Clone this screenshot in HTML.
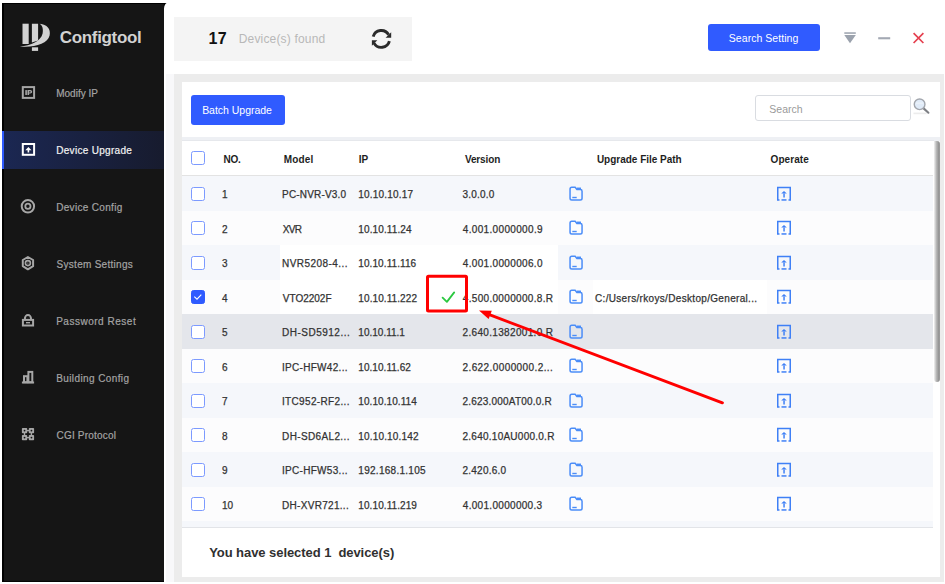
<!DOCTYPE html>
<html><head><meta charset="utf-8">
<style>
*{margin:0;padding:0;box-sizing:border-box}
html,body{width:945px;height:584px;overflow:hidden;background:#fff;font-family:"Liberation Sans",sans-serif;position:relative}
.a,.t{position:absolute}
.t{white-space:nowrap;line-height:1}
.btn{position:absolute;background:#305bff;border-radius:3px}
.row{position:absolute;left:182px;width:751px}
.cb{position:absolute;left:191px;width:14px;height:14px;border:1.5px solid #7c9aff;border-radius:2.5px;background:#fff}
.chk{background:#2f5bff;border-color:#2f5bff}
</style></head><body>
<svg width="0" height="0" style="position:absolute">
<defs>
<g id="ifold" fill="none" stroke="#4b8df8" stroke-width="1.5" stroke-linejoin="round">
<path d="M2.05 3 Q2.05 1.25 3.8 1.25 H7.2 L8.9 3.5 H12.3 Q14.05 3.5 14.05 5.2 V12.2 Q14.05 13.95 12.3 13.95 H3.8 Q2.05 13.95 2.05 12.2 Z"/>
<path d="M9 2.3 H13"/>
<path d="M4.3 11.5 H8.7" stroke-width="1.4"/>
</g>
<g id="iupl" fill="none" stroke="#3f80f6" stroke-width="1.5">
<path d="M3.5 13.95 H1.75 V1.45 H14.25 V13.95 H12.5"/>
<path d="M5.5 13.95 H10.5"/>
<path d="M8 4.9 L10.8 7.6 H5.2 Z" fill="#3f80f6" stroke="none"/>
<path d="M7.3 7.4 H8.8 V11.6 H7.3 Z" fill="#3f80f6" stroke="none"/>
</g>
</defs></svg>

<div class="a" style="left:2px;top:3px;width:162px;height:579px;background:#151515;border-top:1px solid #000;border-left:2px solid #000;border-bottom:1px solid #050505"></div><svg class="a" style="left:158px;top:3px" width="10" height="8" viewBox="158 3 10 8"><path d="M158 3 H166.6 C165.2 3.9 164.2 5.4 164 8.5 H163.9 V4 H158 Z" fill="#000"/></svg>
<div class="a" style="left:2px;top:131px;width:162px;height:38px;background:linear-gradient(to right,#1b2752,#171b2e);border-left:2px solid #2f5bff"></div>
<svg class="a" style="left:0;top:0" width="170" height="584" viewBox="0 0 170 584">
  <g fill="#d2d2d2">
    <rect x="22.5" y="23.7" width="6.2" height="20.3"/>
    <path d="M31.9 23.7 H38.1 V40.6 L31.9 42.6 Z"/>
    <path d="M39.7 23.7 C47 24.2 51 29 49.6 35.5 C47.8 43.5 35 47.8 19.9 46.6 C31 45.5 41 41 42.6 33.5 C43.5 28.5 42.2 25.2 39.7 23.7 Z"/>
    <rect x="31.9" y="47.3" width="6.2" height="3.6"/>
  </g>
  <g fill="none" stroke="#a6a6a6" stroke-width="2">
    <rect x="22.8" y="87.1" width="11.3" height="10.8"/>
    <circle cx="27.9" cy="206.3" r="6.2"/>
    <circle cx="27.9" cy="206.3" r="2.6" stroke-width="1.8"/>
    <path d="M27.9 257 L33.1 260 L33.1 266.2 L27.9 269.3 L22.8 266.2 L22.8 260 Z" stroke-linejoin="round"/>
    <circle cx="27.9" cy="263.1" r="2.5" stroke-width="1.6"/><circle cx="27.9" cy="263.1" r="0.5" stroke-width="0.6" stroke="#777"/>
    <rect x="22.9" y="319.9" width="10.2" height="5.6"/>
    <path d="M24.9 319.6 V318.5 A3 3.4 0 0 1 31 318.5 V319.6"/>
    <path d="M21.9 382.5 H34.1"/>
    <rect x="24" y="376.2" width="3.4" height="6"/>
    <rect x="28.4" y="371.9" width="3.9" height="10.3"/>
  </g>
  <g fill="#a6a6a6">
    <path d="M26 322 H30 V323.4 H26 Z"/>
    <rect x="25.3" y="90.1" width="1.6" height="4.9"/><path fill-rule="evenodd" d="M27.5 90.1 H30.3 A1.9 1.7 0 0 1 30.3 93.5 H29.1 V95 H27.5 Z M29.1 91.2 V92.4 H30.1 A0.6 0.6 0 0 0 30.1 91.2 Z"/>
    <rect x="21.9" y="428" width="5.3" height="5.2" rx="0.8"/>
    <rect x="28.8" y="428" width="5.3" height="5.2" rx="0.8"/>
    <rect x="21.9" y="435" width="5.3" height="5.2" rx="0.8"/>
    <rect x="28.8" y="435" width="5.3" height="5.2" rx="0.8"/>
    <rect x="26.5" y="429.9" width="3" height="1.4"/>
    <rect x="26.5" y="436.9" width="3" height="1.4"/>
    <rect x="23.8" y="432.5" width="1.4" height="3.2"/>
    <rect x="30.7" y="432.5" width="1.4" height="3.2"/>
  </g>
  <g fill="#141414">
    <circle cx="24.55" cy="430.6" r="0.9"/>
    <circle cx="31.45" cy="430.6" r="0.9"/>
    <circle cx="24.55" cy="437.6" r="0.9"/>
    <circle cx="31.45" cy="437.6" r="0.9"/>
  </g>
  <rect x="22.8" y="144" width="11.3" height="10.8" fill="none" stroke="#fff" stroke-width="2"/>
  <path fill="#fff" d="M28.4 146.9 L31.5 150.3 H29.2 V152.4 H27.6 V150.3 H25.3 Z"/>
</svg>
<div class="t" style="left:59.80px;top:29px;font-size:17px;color:#d2d2d2;font-weight:bold;letter-spacing:-0.341px">Configtool</div>
<div class="t" style="left:56.18px;top:89px;font-size:10px;color:#a4a4a4;letter-spacing:0.021px;-webkit-text-stroke:0.2px #a4a4a4">Modify IP</div>
<div class="t" style="left:56.18px;top:146px;font-size:10px;color:#f2f2f2;letter-spacing:0.312px;-webkit-text-stroke:0.2px #f2f2f2">Device Upgrade</div>
<div class="t" style="left:56.18px;top:203px;font-size:10px;color:#a4a4a4;letter-spacing:0.318px;-webkit-text-stroke:0.2px #a4a4a4">Device Config</div>
<div class="t" style="left:56.55px;top:260px;font-size:10px;color:#a4a4a4;letter-spacing:0.283px;-webkit-text-stroke:0.2px #a4a4a4">System Settings</div>
<div class="t" style="left:56.18px;top:317px;font-size:10px;color:#a4a4a4;letter-spacing:0.514px;-webkit-text-stroke:0.2px #a4a4a4">Password Reset</div>
<div class="t" style="left:56.18px;top:374px;font-size:10px;color:#a4a4a4;letter-spacing:0.400px;-webkit-text-stroke:0.2px #a4a4a4">Building Config</div>
<div class="t" style="left:56.49px;top:431px;font-size:10px;color:#a4a4a4;letter-spacing:0.203px;-webkit-text-stroke:0.2px #a4a4a4">CGI Protocol</div>
<div class="a" style="left:174px;top:17px;width:238px;height:44px;background:#f4f4f4"></div>
<div class="t" style="left:208.49px;top:31px;font-size:16px;color:#111;font-weight:bold;letter-spacing:0.414px">17</div>
<div class="t" style="left:238.72px;top:33px;font-size:12px;color:#b8b8b8;letter-spacing:0.173px">Device(s) found</div>
<svg class="a" style="left:366px;top:24px" width="32" height="30" viewBox="366 24 32 30">
  <g fill="none" stroke="#2a2a2a" stroke-width="2.9">
    <path d="M373.2 36.7 A8.4 8.4 0 0 1 388.6 34.7"/>
    <path d="M389.4 41.1 A8.4 8.4 0 0 1 374 43.1"/>
  </g>
  <g fill="#2a2a2a">
    <path d="M391.2 32.2 V37.8 H385.6 Z"/>
    <path d="M371.9 45.8 V40.3 H377.3 Z"/>
  </g>
</svg>
<div class="btn" style="left:707.5px;top:24px;width:112.5px;height:27px"></div>
<div class="t" style="left:728.82px;top:33px;font-size:10.5px;color:#fff;letter-spacing:0.044px">Search Setting</div>
<svg class="a" style="left:840px;top:28px" width="90" height="20" viewBox="840 28 90 20">
  <rect x="844.3" y="32.3" width="11.5" height="1.5" fill="#9ba2ad"/>
  <path d="M844.3 35 H855.8 L850 43.2 Z" fill="#9ba2ad"/>
  <rect x="878.2" y="37.2" width="12" height="2.1" fill="#a3a9b3"/>
  <path d="M913.6 33.2 L923.4 43 M923.4 33.2 L913.6 43" stroke="#e5404f" stroke-width="1.7"/>
</svg>
<div class="a" style="left:166px;top:74px;width:8px;height:508px;background:#f8f8fa"></div>
<div class="a" style="left:174px;top:74px;width:770px;height:508px;background:#ececec"></div>
<div class="a" style="left:182px;top:82px;width:758px;height:495px;background:#fff"></div>
<div class="btn" style="left:191px;top:95px;width:94px;height:30px"></div>
<div class="t" style="left:202.14px;top:105px;font-size:10.5px;color:#fff;letter-spacing:-0.018px">Batch Upgrade</div>
<div class="a" style="left:755px;top:95px;width:156px;height:26px;border:1px solid #d9dce1;border-radius:3px"></div>
<div class="t" style="left:769.32px;top:104px;font-size:10.5px;color:#9a9a9a">Search</div>
<svg class="a" style="left:910px;top:96px" width="24" height="22" viewBox="910 96 24 22">
  <rect x="913.5" y="112.6" width="13" height="1.6" fill="#ececec"/>
  <line x1="923.6" y1="108.4" x2="928.4" y2="112.7" stroke="#7d7f84" stroke-width="2.1" stroke-linecap="round"/>
  <circle cx="919.6" cy="104.3" r="5.35" fill="#e0ebf8" stroke="#a2a6ad" stroke-width="1.4"/>
  <rect x="916" y="102.6" width="7.2" height="1" fill="#f0f5fb"/>
</svg>
<div class="a" style="left:182px;top:137px;width:758px;height:4px;background:#eef0f4"></div>
<div class="a" style="left:182px;top:140px;width:752px;height:1px;background:#e6e8ec"></div>
<div class="a" style="left:182px;top:175px;width:751px;height:1px;background:#e3e3e3"></div>
<div class="cb" style="top:151px"></div>
<div class="t" style="left:223.53px;top:155px;font-size:10px;color:#1e1e1e;font-weight:bold;letter-spacing:-0.210px">NO.</div>
<div class="t" style="left:283.73px;top:155px;font-size:10px;color:#1e1e1e;font-weight:bold;letter-spacing:0.198px">Model</div>
<div class="t" style="left:358.73px;top:155px;font-size:10px;color:#1e1e1e;font-weight:bold">IP</div>
<div class="t" style="left:464.93px;top:155px;font-size:10px;color:#1e1e1e;font-weight:bold;letter-spacing:-0.132px">Version</div>
<div class="t" style="left:596.90px;top:155px;font-size:10px;color:#1e1e1e;font-weight:bold;letter-spacing:-0.012px">Upgrade File Path</div>
<div class="t" style="left:770.59px;top:155px;font-size:10px;color:#1e1e1e;font-weight:bold;letter-spacing:0.076px">Operate</div>
<div class="row" style="top:176.0px;height:34.5px;background:#f5f7fb"></div>
<div class="row" style="top:210.5px;height:34.5px;background:#fcfcfd"></div>
<div class="row" style="top:245.0px;height:34.5px;background:#f5f7fb"></div>
<div class="row" style="top:279.5px;height:34.5px;background:#fcfcfd"></div>
<div class="row" style="top:314.0px;height:34.5px;background:#e4e6eb"></div>
<div class="row" style="top:348.5px;height:34.5px;background:#fcfcfd"></div>
<div class="row" style="top:383.0px;height:34.5px;background:#f5f7fb"></div>
<div class="row" style="top:417.5px;height:34.5px;background:#fcfcfd"></div>
<div class="row" style="top:452.0px;height:34.5px;background:#f5f7fb"></div>
<div class="row" style="top:486.5px;height:34.5px;background:#fcfcfd"></div>
<div class="a" style="left:279.5px;top:245px;width:278.5px;height:69px;background:#fff"></div>
<div class="a" style="left:593px;top:279.5px;width:173.5px;height:34.5px;background:#fff"></div>
<div class="a" style="left:182px;top:521px;width:751px;height:6px;background:#f5f7fb"></div>
<div class="a" style="left:182px;top:527px;width:751px;height:1px;background:#e2e4e8"></div>
<div class="cb" style="top:186.5px"></div>
<div class="t" style="left:222px;top:190px;font-size:10px;color:#333;-webkit-text-stroke:0.25px #333">1</div>
<div class="t" style="left:282.08px;top:190px;font-size:10px;color:#333;letter-spacing:0.177px;-webkit-text-stroke:0.25px #333">PC-NVR-V3.0</div>
<div class="t" style="left:358.34px;top:190px;font-size:10px;color:#333;letter-spacing:0.194px;-webkit-text-stroke:0.25px #333">10.10.10.17</div>
<div class="t" style="left:462.62px;top:190px;font-size:10px;color:#333;letter-spacing:0.182px;-webkit-text-stroke:0.25px #333">3.0.0.0</div>
<svg class="a" style="left:568px;top:185.8px" width="16" height="16" viewBox="0 0 16 16"><use href="#ifold"/></svg>
<svg class="a" style="left:776px;top:185.8px" width="16" height="16" viewBox="0 0 16 16"><use href="#iupl"/></svg>
<div class="cb" style="top:221.0px"></div>
<div class="t" style="left:222px;top:225px;font-size:10px;color:#333;-webkit-text-stroke:0.25px #333">2</div>
<div class="t" style="left:282.68px;top:225px;font-size:10px;color:#333;letter-spacing:-0.637px;-webkit-text-stroke:0.25px #333">XVR</div>
<div class="t" style="left:358.34px;top:225px;font-size:10px;color:#333;letter-spacing:0.113px;-webkit-text-stroke:0.25px #333">10.10.11.24</div>
<div class="t" style="left:462.77px;top:225px;font-size:10px;color:#333;letter-spacing:0.338px;-webkit-text-stroke:0.25px #333">4.001.0000000.9</div>
<svg class="a" style="left:568px;top:220.3px" width="16" height="16" viewBox="0 0 16 16"><use href="#ifold"/></svg>
<svg class="a" style="left:776px;top:220.3px" width="16" height="16" viewBox="0 0 16 16"><use href="#iupl"/></svg>
<div class="cb" style="top:255.5px"></div>
<div class="t" style="left:222px;top:259px;font-size:10px;color:#333;-webkit-text-stroke:0.25px #333">3</div>
<div class="t" style="left:282.08px;top:259px;font-size:10px;color:#333;letter-spacing:0.441px;-webkit-text-stroke:0.25px #333">NVR5208-4...</div>
<div class="t" style="left:358.34px;top:259px;font-size:10px;color:#333;letter-spacing:0.083px;-webkit-text-stroke:0.25px #333">10.10.11.116</div>
<div class="t" style="left:462.77px;top:259px;font-size:10px;color:#333;letter-spacing:0.332px;-webkit-text-stroke:0.25px #333">4.001.0000006.0</div>
<svg class="a" style="left:568px;top:254.8px" width="16" height="16" viewBox="0 0 16 16"><use href="#ifold"/></svg>
<svg class="a" style="left:776px;top:254.8px" width="16" height="16" viewBox="0 0 16 16"><use href="#iupl"/></svg>
<div class="cb chk" style="top:290.0px"></div>
<div class="t" style="left:222px;top:294px;font-size:10px;color:#333;-webkit-text-stroke:0.25px #333">4</div>
<div class="t" style="left:282.86px;top:294px;font-size:10px;color:#333;letter-spacing:-0.010px;-webkit-text-stroke:0.25px #333">VTO2202F</div>
<div class="t" style="left:358.34px;top:294px;font-size:10px;color:#333;letter-spacing:0.089px;-webkit-text-stroke:0.25px #333">10.10.11.222</div>
<div class="t" style="left:462.77px;top:294px;font-size:10px;color:#333;letter-spacing:0.320px;-webkit-text-stroke:0.25px #333">4.500.0000000.8.R</div>
<div class="t" style="left:594.99px;top:294px;font-size:10px;color:#333;letter-spacing:0.325px;-webkit-text-stroke:0.25px #333">C:/Users/rkoys/Desktop/General...</div>
<svg class="a" style="left:568px;top:289.3px" width="16" height="16" viewBox="0 0 16 16"><use href="#ifold"/></svg>
<svg class="a" style="left:776px;top:289.3px" width="16" height="16" viewBox="0 0 16 16"><use href="#iupl"/></svg>
<div class="cb" style="top:324.5px"></div>
<div class="t" style="left:222px;top:328px;font-size:10px;color:#333;-webkit-text-stroke:0.25px #333">5</div>
<div class="t" style="left:282.08px;top:328px;font-size:10px;color:#333;letter-spacing:0.490px;-webkit-text-stroke:0.25px #333">DH-SD5912...</div>
<div class="t" style="left:358.34px;top:328px;font-size:10px;color:#333;letter-spacing:0.009px;-webkit-text-stroke:0.25px #333">10.10.11.1</div>
<div class="t" style="left:462.50px;top:328px;font-size:10px;color:#333;letter-spacing:0.337px;-webkit-text-stroke:0.25px #333">2.640.1382001.0.R</div>
<svg class="a" style="left:568px;top:323.8px" width="16" height="16" viewBox="0 0 16 16"><use href="#ifold"/></svg>
<svg class="a" style="left:776px;top:323.8px" width="16" height="16" viewBox="0 0 16 16"><use href="#iupl"/></svg>
<div class="cb" style="top:359.0px"></div>
<div class="t" style="left:222px;top:363px;font-size:10px;color:#333;-webkit-text-stroke:0.25px #333">6</div>
<div class="t" style="left:281.98px;top:363px;font-size:10px;color:#333;letter-spacing:0.301px;-webkit-text-stroke:0.25px #333">IPC-HFW42...</div>
<div class="t" style="left:358.34px;top:363px;font-size:10px;color:#333;letter-spacing:0.044px;-webkit-text-stroke:0.25px #333">10.10.11.62</div>
<div class="t" style="left:462.50px;top:363px;font-size:10px;color:#333;letter-spacing:0.406px;-webkit-text-stroke:0.25px #333">2.622.0000000.2...</div>
<svg class="a" style="left:568px;top:358.3px" width="16" height="16" viewBox="0 0 16 16"><use href="#ifold"/></svg>
<svg class="a" style="left:776px;top:358.3px" width="16" height="16" viewBox="0 0 16 16"><use href="#iupl"/></svg>
<div class="cb" style="top:393.5px"></div>
<div class="t" style="left:222px;top:397px;font-size:10px;color:#333;-webkit-text-stroke:0.25px #333">7</div>
<div class="t" style="left:281.98px;top:397px;font-size:10px;color:#333;letter-spacing:0.341px;-webkit-text-stroke:0.25px #333">ITC952-RF2...</div>
<div class="t" style="left:358.34px;top:397px;font-size:10px;color:#333;letter-spacing:0.070px;-webkit-text-stroke:0.25px #333">10.10.10.114</div>
<div class="t" style="left:462.50px;top:397px;font-size:10px;color:#333;letter-spacing:0.196px;-webkit-text-stroke:0.25px #333">2.623.000AT00.0.R</div>
<svg class="a" style="left:568px;top:392.8px" width="16" height="16" viewBox="0 0 16 16"><use href="#ifold"/></svg>
<svg class="a" style="left:776px;top:392.8px" width="16" height="16" viewBox="0 0 16 16"><use href="#iupl"/></svg>
<div class="cb" style="top:428.0px"></div>
<div class="t" style="left:222px;top:432px;font-size:10px;color:#333;-webkit-text-stroke:0.25px #333">8</div>
<div class="t" style="left:282.08px;top:432px;font-size:10px;color:#333;letter-spacing:0.362px;-webkit-text-stroke:0.25px #333">DH-SD6AL2...</div>
<div class="t" style="left:358.34px;top:432px;font-size:10px;color:#333;letter-spacing:0.161px;-webkit-text-stroke:0.25px #333">10.10.10.142</div>
<div class="t" style="left:462.50px;top:432px;font-size:10px;color:#333;letter-spacing:0.252px;-webkit-text-stroke:0.25px #333">2.640.10AU000.0.R</div>
<svg class="a" style="left:568px;top:427.3px" width="16" height="16" viewBox="0 0 16 16"><use href="#ifold"/></svg>
<svg class="a" style="left:776px;top:427.3px" width="16" height="16" viewBox="0 0 16 16"><use href="#iupl"/></svg>
<div class="cb" style="top:462.5px"></div>
<div class="t" style="left:222px;top:466px;font-size:10px;color:#333;-webkit-text-stroke:0.25px #333">9</div>
<div class="t" style="left:281.98px;top:466px;font-size:10px;color:#333;letter-spacing:0.301px;-webkit-text-stroke:0.25px #333">IPC-HFW53...</div>
<div class="t" style="left:358.34px;top:466px;font-size:10px;color:#333;letter-spacing:0.278px;-webkit-text-stroke:0.25px #333">192.168.1.105</div>
<div class="t" style="left:462.50px;top:466px;font-size:10px;color:#333;letter-spacing:0.236px;-webkit-text-stroke:0.25px #333">2.420.6.0</div>
<svg class="a" style="left:568px;top:461.8px" width="16" height="16" viewBox="0 0 16 16"><use href="#ifold"/></svg>
<svg class="a" style="left:776px;top:461.8px" width="16" height="16" viewBox="0 0 16 16"><use href="#iupl"/></svg>
<div class="cb" style="top:497.0px"></div>
<div class="t" style="left:222px;top:501px;font-size:10px;color:#333;-webkit-text-stroke:0.25px #333">10</div>
<div class="t" style="left:282.08px;top:501px;font-size:10px;color:#333;letter-spacing:0.298px;-webkit-text-stroke:0.25px #333">DH-XVR721...</div>
<div class="t" style="left:358.34px;top:501px;font-size:10px;color:#333;letter-spacing:0.086px;-webkit-text-stroke:0.25px #333">10.10.11.219</div>
<div class="t" style="left:462.77px;top:501px;font-size:10px;color:#333;letter-spacing:0.307px;-webkit-text-stroke:0.25px #333">4.001.0000000.3</div>
<svg class="a" style="left:568px;top:496.3px" width="16" height="16" viewBox="0 0 16 16"><use href="#ifold"/></svg>
<svg class="a" style="left:776px;top:496.3px" width="16" height="16" viewBox="0 0 16 16"><use href="#iupl"/></svg>
<div class="t" style="left:209.18px;top:546px;font-size:13px;color:#303030;font-weight:bold;letter-spacing:-0.062px">You have selected 1&nbsp; device(s)</div>
<div class="a" style="left:934px;top:141px;width:6px;height:241px;border-radius:0 3px 3px 3px;background:linear-gradient(to right,#f2f2f2,#b8b8b8 40%,#8e8e8e 85%,#aaa)"></div>
<svg class="a" style="left:0;top:0" width="945" height="584" viewBox="0 0 945 584">
  <path d="M194.3 296.6 L197 299.2 L201.3 294.6" fill="none" stroke="#fff" stroke-width="1.1"/>
  <rect x="427.5" y="276.3" width="39" height="34.7" rx="1" fill="none" stroke="#ff0000" stroke-width="3"/>
  <path d="M442.6 297.6 L446.9 301.9 L454.2 292.4" fill="none" stroke="#2bc840" stroke-width="1.8" stroke-linecap="round" stroke-linejoin="round"/>
  <line x1="722.4" y1="402.8" x2="488" y2="314.2" stroke="#ff0000" stroke-width="3" stroke-linecap="round"/>
  <path d="M479 310.6 L491.8 310.7 L488.6 319.1 Z" fill="#ff0000"/>
</svg>
</body></html>
